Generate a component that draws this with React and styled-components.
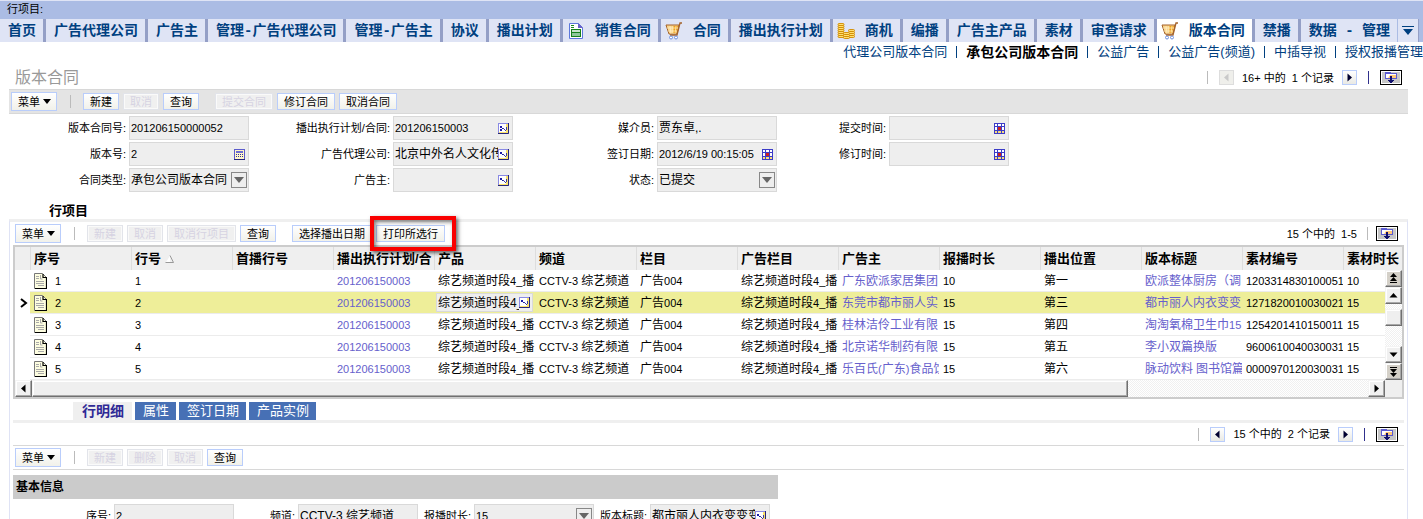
import { Fragment } from 'react';
import styled, { createGlobalStyle, css } from 'styled-components';

const navTabs = [
  { label: '首页' },
  { label: '广告代理公司' },
  { label: '广告主' },
  { label: '管理-广告代理公司' },
  { label: '管理-广告主' },
  { label: '协议' },
  { label: '播出计划' },
  { label: '销售合同', icon: 'sheet' },
  { label: '合同', icon: 'cart' },
  { label: '播出执行计划' },
  { label: '商机', icon: 'coins' },
  { label: '编播' },
  { label: '广告主产品' },
  { label: '素材' },
  { label: '审查请求' },
  { label: '版本合同', icon: 'cart', active: true },
  { label: '禁播' },
  { label: '数据 - 管理' },
];

const subLinks = [
  '代理公司版本合同',
  '承包公司版本合同',
  '公益广告',
  '公益广告(频道)',
  '中插导视',
  '授权报播管理',
];

const contractFields = [
  { label: '版本合同号', value: '201206150000052' },
  { label: '播出执行计划/合同', value: '201206150003', icon: 'pickMany' },
  { label: '媒介员', value: '贾东卓,.', cjk: true },
  { label: '提交时间', value: '', icon: 'calendar' },
  { label: '版本号', value: '2', icon: 'calc' },
  { label: '广告代理公司', value: '北京中外名人文化传播', icon: 'pick', cjk: true },
  { label: '签订日期', value: '2012/6/19 00:15:05', icon: 'calendar' },
  { label: '修订时间', value: '', icon: 'calendar' },
  { label: '合同类型', value: '承包公司版本合同', select: true, cjk: true },
  { label: '广告主', value: '', icon: 'pick' },
  { label: '状态', value: '已提交', select: true, cjk: true },
];

const detailFields = [
  { label: '序号', value: '2' },
  { label: '频道', value: 'CCTV-3 综艺频道', cjk: true },
  { label: '报播时长', value: '15', select: true },
  { label: '版本标题', value: '都市丽人内衣变变变篇', icon: 'pick', cjk: true },
];

const columns = [
  '序号',
  '行号',
  '首播行号',
  '播出执行计划/合',
  '产品',
  '频道',
  '栏目',
  '广告栏目',
  '广告主',
  '报播时长',
  '播出位置',
  '版本标题',
  '素材编号',
  '素材时长',
];

const rows = [
  { no: 1, owner: '广东欧派家居集团', time: 10, place: '第一', title: '欧派整体厨房（调', code: '1203314830100051' },
  { no: 2, owner: '东莞市都市丽人实', time: 15, place: '第三', title: '都市丽人内衣变变', code: '1271820010030021' },
  { no: 3, owner: '桂林洁伶工业有限', time: 15, place: '第四', title: '淘淘氧棉卫生巾15', code: '1254201410150011' },
  { no: 4, owner: '北京诺华制药有限', time: 15, place: '第五', title: '李小双篇换版', code: '9600610040030031' },
  { no: 5, owner: '乐百氏(广东)食品饮', time: 15, place: '第六', title: '脉动饮料 图书馆篇', code: '0000970120030031' },
];
const selectedRow = 2;

// latin runs are set one size smaller than the chinese around them
function Mixed({ text }) {
  return text
    .split(/([\x20-\x7e]+)/)
    .map((part, i) => (i % 2 ? <Latin key={i}>{part}</Latin> : part));
}

function CartIcon() {
  return (
    <svg width='18' height='18' viewBox='0 0 18 18'>
      <path d='M1 3h13l-2 9H4z' fill='#fbd58a' stroke='#a5632b' />
      <path d='M8 4h5l-2 7H8z' fill='#f0a21a' />
      <path d='M2 6h11M3 9h9M5 4l1 8M8 4v8M11 4l-1 8' stroke='#fff0c8' strokeWidth='0.7' fill='none' />
      <path d='M17 1h-2l-3 12H5' stroke='#a5632b' strokeWidth='1.3' fill='none' />
      <circle cx='6' cy='15.5' r='1.5' fill='#fff' stroke='#6d8fe0' />
      <circle cx='11' cy='15.5' r='1.5' fill='#fff' stroke='#6d8fe0' />
    </svg>
  );
}

function SheetIcon() {
  return (
    <svg width='18' height='18' viewBox='0 0 18 18'>
      <path d='M2.5 1.5h9l4 4v11h-13z' fill='#fff' stroke='#5c78dc' />
      <path d='M11 1v5h5z' fill='#6a62c8' />
      <path d='M4 3.5h3M4 5.5h3' stroke='#1f8a1f' />
      <rect x='4.5' y='7.5' width='9' height='7' fill='#8fc79c' stroke='#15801c' />
      <path d='M4 10.5h10' stroke='#15801c' />
      <path d='M5 9h8' stroke='#fff' />
    </svg>
  );
}

function CoinsIcon() {
  const stack = (x, y, n) =>
    Array.from({ length: n }, (_, i) => (
      <rect
        key={x + '-' + i}
        x={x}
        y={y + i * 2}
        width='6'
        height='2'
        rx='1'
        fill='#ffdf70'
        stroke='#d08a00'
        strokeWidth='0.9'
      />
    ));
  return (
    <svg width='18' height='18' viewBox='0 0 18 18'>
      {stack(1, 1.5, 7)}
      {stack(11.5, 7.5, 4)}
      {stack(6.5, 10.5, 3)}
    </svg>
  );
}

function DocIcon() {
  return (
    <svg width='13' height='16' viewBox='0 0 13 16'>
      <path d='M0.5 0.5h8l4 4v11h-12z' fill='#fdfde0' stroke='#777' />
      <path d='M9 1v3.5h3.5M12.5 4v11.5H1' fill='none' stroke='#000' strokeWidth='1.2' />
      <path d='M2 3.5h3M2 5.5h3M6.5 2v4h2M2 8.5h8M2 10.5h8M4 12.5h6' stroke='#a9a9a9' fill='none' />
    </svg>
  );
}

function PickIcon({ many }) {
  return (
    <svg width='11' height='11' viewBox='0 0 11 11'>
      <rect width='11' height='11' fill='#8a8ae4' />
      <rect x='1' y='1' width='9' height='9' fill='#fff' />
      <path d='M10 1v9H1v-1h7V1z' fill='#fbe26c' />
      <path d='M10.5 0v10.5H0' stroke='#26267c' fill='none' />
      <path d='M2 3h2v2H2zM4 5h1v1H4z' fill='#1c1ca8' />
      {many && <path d='M2 6h2v2H2z' fill='#1c1ca8' />}
      <path d='M5 5h1v1h1v1h1V4h1v3H8v1H7V7H6V6H5z' fill='#3c3ca0' />
    </svg>
  );
}

function CalcIcon() {
  return (
    <svg width='11' height='11' viewBox='0 0 11 11'>
      <rect x='0.5' y='0.5' width='10' height='10' fill='#fff6c8' stroke='#5c5ccc' />
      <rect x='2' y='2' width='7' height='2' fill='#6d6dd4' />
      <path d='M2 5.5h7M2 7.5h7' stroke='#333399' strokeDasharray='1 1' />
      <path d='M0 10.5h11' stroke='#26267c' />
    </svg>
  );
}

function CalendarIcon() {
  return (
    <svg width='11' height='11' viewBox='0 0 11 11'>
      <rect width='11' height='11' fill='#3c3cc8' />
      <path d='M1 1h2v2H1zM4 1h3v2H4zM8 1h2v2H8zM1 4h2v3H1zM8 4h2v3H8z' fill='#fff' />
      <path d='M1 8h2v2H1zM4 8h3v2H4zM8 8h2v2H8z' fill='#f7dc7c' />
      <rect x='4' y='4' width='3' height='3' fill='#cf2020' />
    </svg>
  );
}

function LayoutIcon() {
  return (
    <svg width='18' height='11' viewBox='0 0 18 11'>
      <rect width='18' height='11' fill='#c6c6c6' />
      <path d='M3 0h6v1h6v6H3z' fill='#5a5ad0' />
      <path d='M4 2h10v4H4z' fill='#fff' />
      <path d='M8 3h6v3H6z' fill='#ffc878' />
      <path d='M8 4h2v4h2v1h-1v1h-1v1H8v-1H7V9H6V8h2z' fill='#10106c' />
    </svg>
  );
}

function Arrow({ dir, double, color = '#000' }) {
  const angle = { up: 0, right: 90, down: 180, left: 270 }[dir];
  return (
    <svg width='11' height='11' viewBox='0 0 11 11'>
      <g transform={`rotate(${angle} 5.5 5.5)`} fill={color}>
        {double ? (
          <path d='M5.5 0L9 4H2zM5.5 4L9 8H2zM2 9h7v1H2z' />
        ) : (
          <path d='M5.5 3L9.5 7.5h-8z' />
        )}
      </g>
    </svg>
  );
}

const icons = {
  cart: CartIcon,
  sheet: SheetIcon,
  coins: CoinsIcon,
  pick: PickIcon,
  pickMany: () => <PickIcon many />,
  calc: CalcIcon,
  calendar: CalendarIcon,
};

function Field({ field, prefix }) {
  const { label, value, icon, select, cjk } = field;
  const id = prefix + label;
  const Icon = icons[icon];
  return (
    <>
      <FieldLabel htmlFor={id}>{label}:</FieldLabel>
      <FieldBox>
        {select ? (
          <FieldSelect id={id} $cjk={cjk} defaultValue={value}>
            <option>{value}</option>
          </FieldSelect>
        ) : (
          <FieldInput id={id} $cjk={cjk} defaultValue={value} />
        )}
        {Icon && <Icon />}
        {select && (
          <SelectArrow>
            <svg width='10' height='6' viewBox='0 0 10 6'>
              <path d='M0 0h10L5 6z' fill='#666' />
            </svg>
          </SelectArrow>
        )}
      </FieldBox>
    </>
  );
}

function MenuButton() {
  return (
    <>
      <Menu>
        菜单
        <svg width='8' height='5' viewBox='0 0 8 5'>
          <path d='M0 0h8L4 5z' fill='#000' />
        </svg>
      </Menu>
      <Divider />
    </>
  );
}

function LayoutButton() {
  return (
    <FrameButton aria-label='布局'>
      <LayoutIcon />
    </FrameButton>
  );
}

function RecordPager({ text, first }) {
  return (
    <Pager>
      <Divider />
      <StepButton disabled={first} aria-label='上一个'>
        <Arrow dir='left' color={first ? '#c9c9c9' : '#000030'} />
      </StepButton>
      <PagerText>{text}</PagerText>
      <StepButton aria-label='下一个'>
        <Arrow dir='right' color='#000030' />
      </StepButton>
      <Divider $dark />
      <LayoutButton />
    </Pager>
  );
}

function LineItems() {
  return (
    <TableFrame>
      <Table>
        <colgroup>
          <col className='marker' />
          {columns.slice(0, -1).map((name) => (
            <col key={name} className='data' />
          ))}
          <col />
          <col className='scroll' />
        </colgroup>
        <thead>
          <tr>
            <th aria-label='当前行' />
            {columns.map((name, i) => (
              <th key={name} colSpan={i === columns.length - 1 ? 2 : 1}>
                {name}
                {name === '行号' && (
                  <svg width='9' height='8' viewBox='0 0 9 8'>
                    <path d='M1 7L5 1v6z' fill='#fff' />
                    <path d='M5 0.5L8.5 7.5H0.5' fill='none' stroke='#999' />
                  </svg>
                )}
              </th>
            ))}
          </tr>
        </thead>
        <tbody>
          {rows.map((row) => {
            const selected = row.no === selectedRow;
            return (
              <Row key={row.no} $selected={selected}>
                <MarkerCell>
                  {selected && (
                    <svg width='8' height='10' viewBox='0 0 8 10'>
                      <path d='M1 1l5 4-5 4' stroke='#000' strokeWidth='2' fill='none' />
                    </svg>
                  )}
                </MarkerCell>
                <td>
                  <RowNumber>
                    <DocIcon />
                    {row.no}
                  </RowNumber>
                </td>
                <td>{row.no}</td>
                <td />
                <td>
                  <CellLink href='#'>201206150003</CellLink>
                </td>
                {selected ? (
                  <EditCell>
                    <CellEditor>
                      <FieldInput $cjk aria-label='产品' defaultValue='综艺频道时段4_播' />
                      <PickIcon />
                    </CellEditor>
                  </EditCell>
                ) : (
                  <CjkCell>
                    <Mixed text='综艺频道时段4_播' />
                  </CjkCell>
                )}
                <CjkCell>
                  <Mixed text='CCTV-3 综艺频道' />
                </CjkCell>
                <CjkCell>
                  <Mixed text='广告004' />
                </CjkCell>
                <CjkCell>
                  <Mixed text='综艺频道时段4_播' />
                </CjkCell>
                <CjkCell>
                  <CellLink href='#'>
                    <Mixed text={row.owner} />
                  </CellLink>
                </CjkCell>
                <td>{row.time}</td>
                <CjkCell>{row.place}</CjkCell>
                <CjkCell>
                  <CellLink href='#'>
                    <Mixed text={row.title} />
                  </CellLink>
                </CjkCell>
                <td>{row.code}</td>
                <td>{row.time}</td>
                {row.no === 1 && (
                  <ScrollCell rowSpan={rows.length}>
                    <VerticalScroll>
                      <ScrollButton $gray aria-label='首页记录'>
                        <Arrow dir='up' double />
                      </ScrollButton>
                      <ScrollButton aria-label='向上'>
                        <Arrow dir='up' />
                      </ScrollButton>
                      <Track $vertical>
                        <Thumb $vertical />
                      </Track>
                      <ScrollButton aria-label='向下'>
                        <Arrow dir='down' />
                      </ScrollButton>
                      <ScrollButton $gray aria-label='末页记录'>
                        <Arrow dir='down' double />
                      </ScrollButton>
                    </VerticalScroll>
                  </ScrollCell>
                )}
              </Row>
            );
          })}
        </tbody>
      </Table>
      <HorizontalScroll>
        <ScrollButton aria-label='向左'>
          <Arrow dir='left' />
        </ScrollButton>
        <Track>
          <Thumb />
        </Track>
        <ScrollButton aria-label='向右'>
          <Arrow dir='right' />
        </ScrollButton>
      </HorizontalScroll>
    </TableFrame>
  );
}

function App() {
  return (
    <>
      <GlobalStyle />
      <TopBar>行项目:</TopBar>
      <Nav>
        {navTabs.map(({ label, icon, active }) => {
          const Icon = icons[icon];
          return (
            <NavTab key={label} href='#' $active={active} $icon={icon}>
              {Icon && <Icon />}
              {label}
            </NavTab>
          );
        })}
        <NavMore aria-label='更多'>
          <svg width='12' height='10' viewBox='0 0 12 10'>
            <path d='M0 0h12v1H0zM1 3h10L6 9z' fill='#004080' />
          </svg>
        </NavMore>
      </Nav>
      <SubNav>
        {subLinks.map((label, i) => (
          <Fragment key={label}>
            {i > 0 && <LinkDivider />}
            <SubLink href='#' $active={i === 1}>
              {label}
            </SubLink>
          </Fragment>
        ))}
      </SubNav>

      <Page>
        <TitleRow>
          <h1>版本合同</h1>
          <RecordPager text='16+ 中的  1 个记录' first />
        </TitleRow>
        <Toolbar $gray>
          <MenuButton />
          <Button>新建</Button>
          <Button disabled>取消</Button>
          <Button>查询</Button>
          <Space />
          <Button disabled>提交合同</Button>
          <Button>修订合同</Button>
          <Button>取消合同</Button>
        </Toolbar>
        <ContractForm>
          {contractFields.map((field) => (
            <Field key={field.label} field={field} prefix='contract-' />
          ))}
        </ContractForm>

        <SectionTitle>行项目</SectionTitle>
        <Panel>
          <Toolbar>
            <MenuButton />
            <Button disabled>新建</Button>
            <Button disabled>取消</Button>
            <Button disabled>取消行项目</Button>
            <Button>查询</Button>
            <Space />
            <Button>选择播出日期</Button>
            <Highlighted>
              <Button>打印所选行</Button>
            </Highlighted>
            <Pager>
              <PagerText>15 个中的  1-5</PagerText>
              <Divider />
              <LayoutButton />
            </Pager>
          </Toolbar>
          <LineItems />

          <DetailTabs>
            <DetailTab $active>行明细</DetailTab>
            <DetailTab>属性</DetailTab>
            <DetailTab>签订日期</DetailTab>
            <DetailTab>产品实例</DetailTab>
          </DetailTabs>
          <DetailPager>
            <RecordPager text='15 个中的  2 个记录' />
          </DetailPager>
          <Toolbar $ruled>
            <MenuButton />
            <Button disabled>新建</Button>
            <Button disabled>删除</Button>
            <Button disabled>取消</Button>
            <Button>查询</Button>
          </Toolbar>
          <DetailTitle>基本信息</DetailTitle>
          <DetailForm>
            {detailFields.map((field) => (
              <Field key={field.label} field={field} prefix='detail-' />
            ))}
          </DetailForm>
        </Panel>
      </Page>
    </>
  );
}

const GlobalStyle = createGlobalStyle`
  *, *::before, *::after {
    box-sizing: border-box;
  }
  body {
    margin: 0;
    overflow: hidden;
    background: #fff;
    color: #000;
    font: 11px/16px 'Liberation Sans', 'Noto Sans CJK SC', sans-serif;
  }
  button, input, select {
    margin: 0;
    font: inherit;
    color: inherit;
  }
  a {
    text-decoration: none;
  }
  svg {
    flex: none;
    display: block;
  }
  h1, h2, h3 {
    margin: 0;
  }
`;
const Latin = styled.span`
  font-size: 11px;
`;
const TopBar = styled.header`
  height: 19px;
  padding-left: 7px;
  border-top: 1px solid #dfe4f5;
  background: #abbce4;
`;
const Nav = styled.nav`
  display: flex;
  height: 23px;
  background: #abbce4;
`;
const NavTab = styled.a`
  display: flex;
  align-items: center;
  gap: 10px;
  flex: none;
  padding: 0 7px 0 ${({ $icon }) => ($icon ? '4px' : '8px')};
  border-right: 3px solid #949fc6;
  background: ${({ $active }) => ($active ? '#fff' : '#dfe4f5')};
  color: #004080;
  font: bold 14px/20px 'Liberation Mono', 'Noto Sans CJK SC', monospace;
  white-space: pre;
  &:nth-last-child(2) {
    border-right: 1px solid #abbce4;
  }
`;
const NavMore = styled.button`
  display: flex;
  align-items: center;
  justify-content: center;
  width: 21px;
  padding: 0;
  border: 0;
  border-right: 1px solid #949fc6;
  background: #dfe4f5;
`;
const SubNav = styled.nav`
  display: flex;
  align-items: center;
  justify-content: flex-end;
  height: 20px;
`;
const SubLink = styled.a`
  flex: none;
  color: ${({ $active }) => ($active ? '#000' : '#004080')};
  font-size: ${({ $active }) => ($active ? '14px' : '13px')};
  font-weight: ${({ $active }) => ($active ? 'bold' : 'normal')};
  line-height: 20px;
`;
const LinkDivider = styled.span`
  flex: none;
  width: 1px;
  height: 12px;
  margin: 0 9px;
  background: #004080;
`;
const Page = styled.main`
  margin: 0 15px 0 9px;
`;
const TitleRow = styled.div`
  display: flex;
  align-items: center;
  height: 27px;
  padding: 4px 6px 0 6px;
  & h1 {
    color: #999;
    font-size: 16px;
    font-weight: 400;
    line-height: 22px;
  }
`;
const Pager = styled.div`
  display: flex;
  align-items: center;
  margin-left: auto;
`;
const PagerText = styled.span`
  margin: 0 8px;
  white-space: pre;
`;
const Divider = styled.span`
  flex: none;
  width: 1px;
  height: 13px;
  margin: 0 11px;
  background: ${({ $dark }) => ($dark ? '#30308c' : '#bbb')};
  ${PagerText} + & {
    margin: 0 8px 0 2px;
  }
`;
const StepButton = styled.button`
  display: flex;
  align-items: center;
  justify-content: center;
  width: 15px;
  height: 15px;
  padding: 0;
  border: 1px solid #b9cdfb;
  background: linear-gradient(#fff, #e9e9e4);
  &:disabled {
    border-color: #ddd;
    background: #efefeb;
  }
`;
const FrameButton = styled.button`
  padding: 1px;
  border: 1px solid #000;
  background: #fff;
`;
const Toolbar = styled.div`
  display: flex;
  align-items: center;
  gap: 4px;
  height: 23px;
  padding: 0 6px 0 2px;
  ${({ $gray, $ruled }) =>
    ($gray || $ruled) &&
    css`
      height: 25px;
      border: solid #d8d8d8;
      border-width: 1px 0;
      background: ${$gray ? '#e4e4e4' : '#fff'};
    `}
  & > ${Divider} {
    margin: 0 8px 0 9px;
  }
`;
const Menu = styled.button`
  display: flex;
  align-items: center;
  gap: 3px;
  height: 19px;
  padding: 0 5px 0 6px;
  border: 1px solid #b9cdfb;
  background: linear-gradient(#fff, #f1f1ea);
`;
const Button = styled.button`
  display: block;
  flex: none;
  height: 17px;
  padding: 0 6px;
  border: 1px solid #b9cdfb;
  background: linear-gradient(#fff, #f1f1ea);
  line-height: 14px;
  white-space: nowrap;
  &:disabled {
    border-color: #e2e4ea;
    background: #f0f0f0;
    box-shadow: inset 0 0 0 1px #fafafa;
    color: #d6d3e2;
  }
`;
const Space = styled.span`
  width: 8px;
`;
const Highlighted = styled.div`
  position: relative;
  &::after {
    content: '';
    position: absolute;
    inset: -9px -11px -9px -6px;
    border: 4px solid #f90000;
    box-shadow: 2px 2px 4px rgba(0, 0, 0, 0.6),
      inset 2px 2px 4px rgba(0, 0, 0, 0.5);
    pointer-events: none;
    z-index: 1;
  }
`;
const ContractForm = styled.form`
  display: grid;
  grid-template-columns: 120px 120px 144px 120px 144px 120px 112px 120px;
  row-gap: 2px;
  padding: 2px 0;
`;
const FieldLabel = styled.label`
  padding-right: 3px;
  line-height: 24px;
  text-align: right;
  white-space: nowrap;
`;
const FieldBox = styled.div`
  position: relative;
  display: flex;
  align-items: center;
  height: 24px;
  padding: 0 3px 0 1px;
  border: 1px solid #d9d9d9;
  background: #eee;
`;
const FieldInput = styled.input`
  flex: 1;
  min-width: 0;
  height: 16px;
  padding: 0;
  border: 0;
  outline: 0;
  background: transparent;
  font-size: ${({ $cjk }) => ($cjk ? '12px' : '11px')};
`;
const FieldSelect = styled(FieldInput).attrs({ as: 'select' })`
  appearance: none;
  align-self: stretch;
  height: auto;
`;
const SelectArrow = styled.span`
  position: absolute;
  right: 1px;
  top: 3px;
  display: flex;
  align-items: center;
  justify-content: center;
  width: 16px;
  height: 16px;
  border: 1px solid #888;
  background: #eee;
  pointer-events: none;
`;
const SectionTitle = styled.h2`
  padding: 8px 0 0 40px;
  font-size: 13px;
  line-height: 17px;
`;
const Panel = styled.section`
  padding: 0 3px;
  border: 1px solid #dfe3f5;
  border-top: 3px solid #efefef;
`;
const TableFrame = styled.div`
  border: 2px solid #ccc;
`;
const Table = styled.table`
  width: 100%;
  table-layout: fixed;
  border-collapse: separate;
  border-spacing: 0;
  & .marker {
    width: 15px;
  }
  & .data {
    width: 101px;
  }
  & .scroll {
    width: 17px;
  }
  & th {
    height: 23px;
    padding: 0 0 0 3px;
    border-left: 1px solid #ddd;
    background: #efefef;
    font-size: 13px;
    line-height: 20px;
    text-align: left;
    white-space: nowrap;
    overflow: hidden;
  }
  & th:first-child {
    border-left: 0;
  }
  & th svg {
    display: inline-block;
    margin-left: 4px;
  }
  & td {
    height: 22px;
    padding: 0 0 0 4px;
    border-bottom: 1px solid #ececec;
    line-height: 18px;
    white-space: nowrap;
    overflow: hidden;
  }
`;
const Row = styled.tr`
  background: ${({ $selected }) => ($selected ? '#eeee99' : '#fff')};
`;
const MarkerCell = styled.td`
  ${Table} & {
    padding: 0 0 0 5px;
    border-bottom: 0;
    background: #fff;
  }
`;
const CjkCell = styled.td`
  font-size: 12px;
`;
const RowNumber = styled.span`
  display: flex;
  align-items: center;
  gap: 8px;
`;
const CellLink = styled.a`
  color: #6660cc;
`;
const EditCell = styled.td`
  ${Table} & {
    padding: 0 2px;
  }
`;
const CellEditor = styled.div`
  display: flex;
  align-items: center;
  height: 19px;
  padding: 0 2px 0 1px;
  border: 1px solid #d9d9d9;
  background: #eee;
`;
const ScrollCell = styled.td`
  ${Table} & {
    padding: 0;
    border: 0;
    background: #fff;
  }
`;
const VerticalScroll = styled.div`
  display: flex;
  flex-direction: column;
  height: 110px;
`;
const raised = css`
  border: 1px solid;
  border-color: #f4f4f4 #707070 #707070 #f4f4f4;
  box-shadow: inset -1px -1px 0 #a8a8a8, inset 1px 1px 0 #fff;
`;
const ScrollButton = styled.button`
  display: flex;
  align-items: center;
  justify-content: center;
  flex: none;
  width: 17px;
  height: 17px;
  padding: 0;
  background: ${({ $gray }) => ($gray ? '#d4d0c8' : '#f0f0f0')};
  ${raised}
`;
const Track = styled.div`
  flex: 1;
  padding-top: ${({ $vertical }) => ($vertical ? '5px' : '0')};
  background: repeating-conic-gradient(#fff 0 25%, #f0f0f0 0 50%) 0 0 / 2px 2px;
`;
const Thumb = styled.div`
  width: ${({ $vertical }) => ($vertical ? '100%' : '82%')};
  height: 17px;
  background: #efefef;
  ${raised}
`;
const HorizontalScroll = styled.div`
  display: flex;
  padding-right: 17px;
  background: #efefef;
`;
const DetailTabs = styled.div`
  display: flex;
  gap: 3px;
  padding: 3px 0 0 60px;
  border-bottom: 3px solid #efefef;
`;
const DetailTab = styled.button`
  height: 18px;
  padding: 0 7px 0 8px;
  border: 0;
  background: #4770b5;
  color: #fff;
  font-size: 13px;
  line-height: 18px;
  ${({ $active }) =>
    $active &&
    css`
      padding: 0 8px 0 9px;
      background: #efefef;
      color: #2f2a96;
      font-size: 14px;
      font-weight: bold;
    `}
`;
const DetailPager = styled.div`
  display: flex;
  height: 22px;
  padding-right: 6px;
`;
const DetailTitle = styled.h3`
  width: 765px;
  margin-top: 5px;
  padding-left: 3px;
  background: #cbcbcb;
  font-size: 12px;
  line-height: 24px;
`;
const DetailForm = styled.form`
  display: grid;
  grid-template-columns: 101px 120px 64px 120px 56px 120px 56px 120px;
  padding: 5px 0;
`;

export default App;
